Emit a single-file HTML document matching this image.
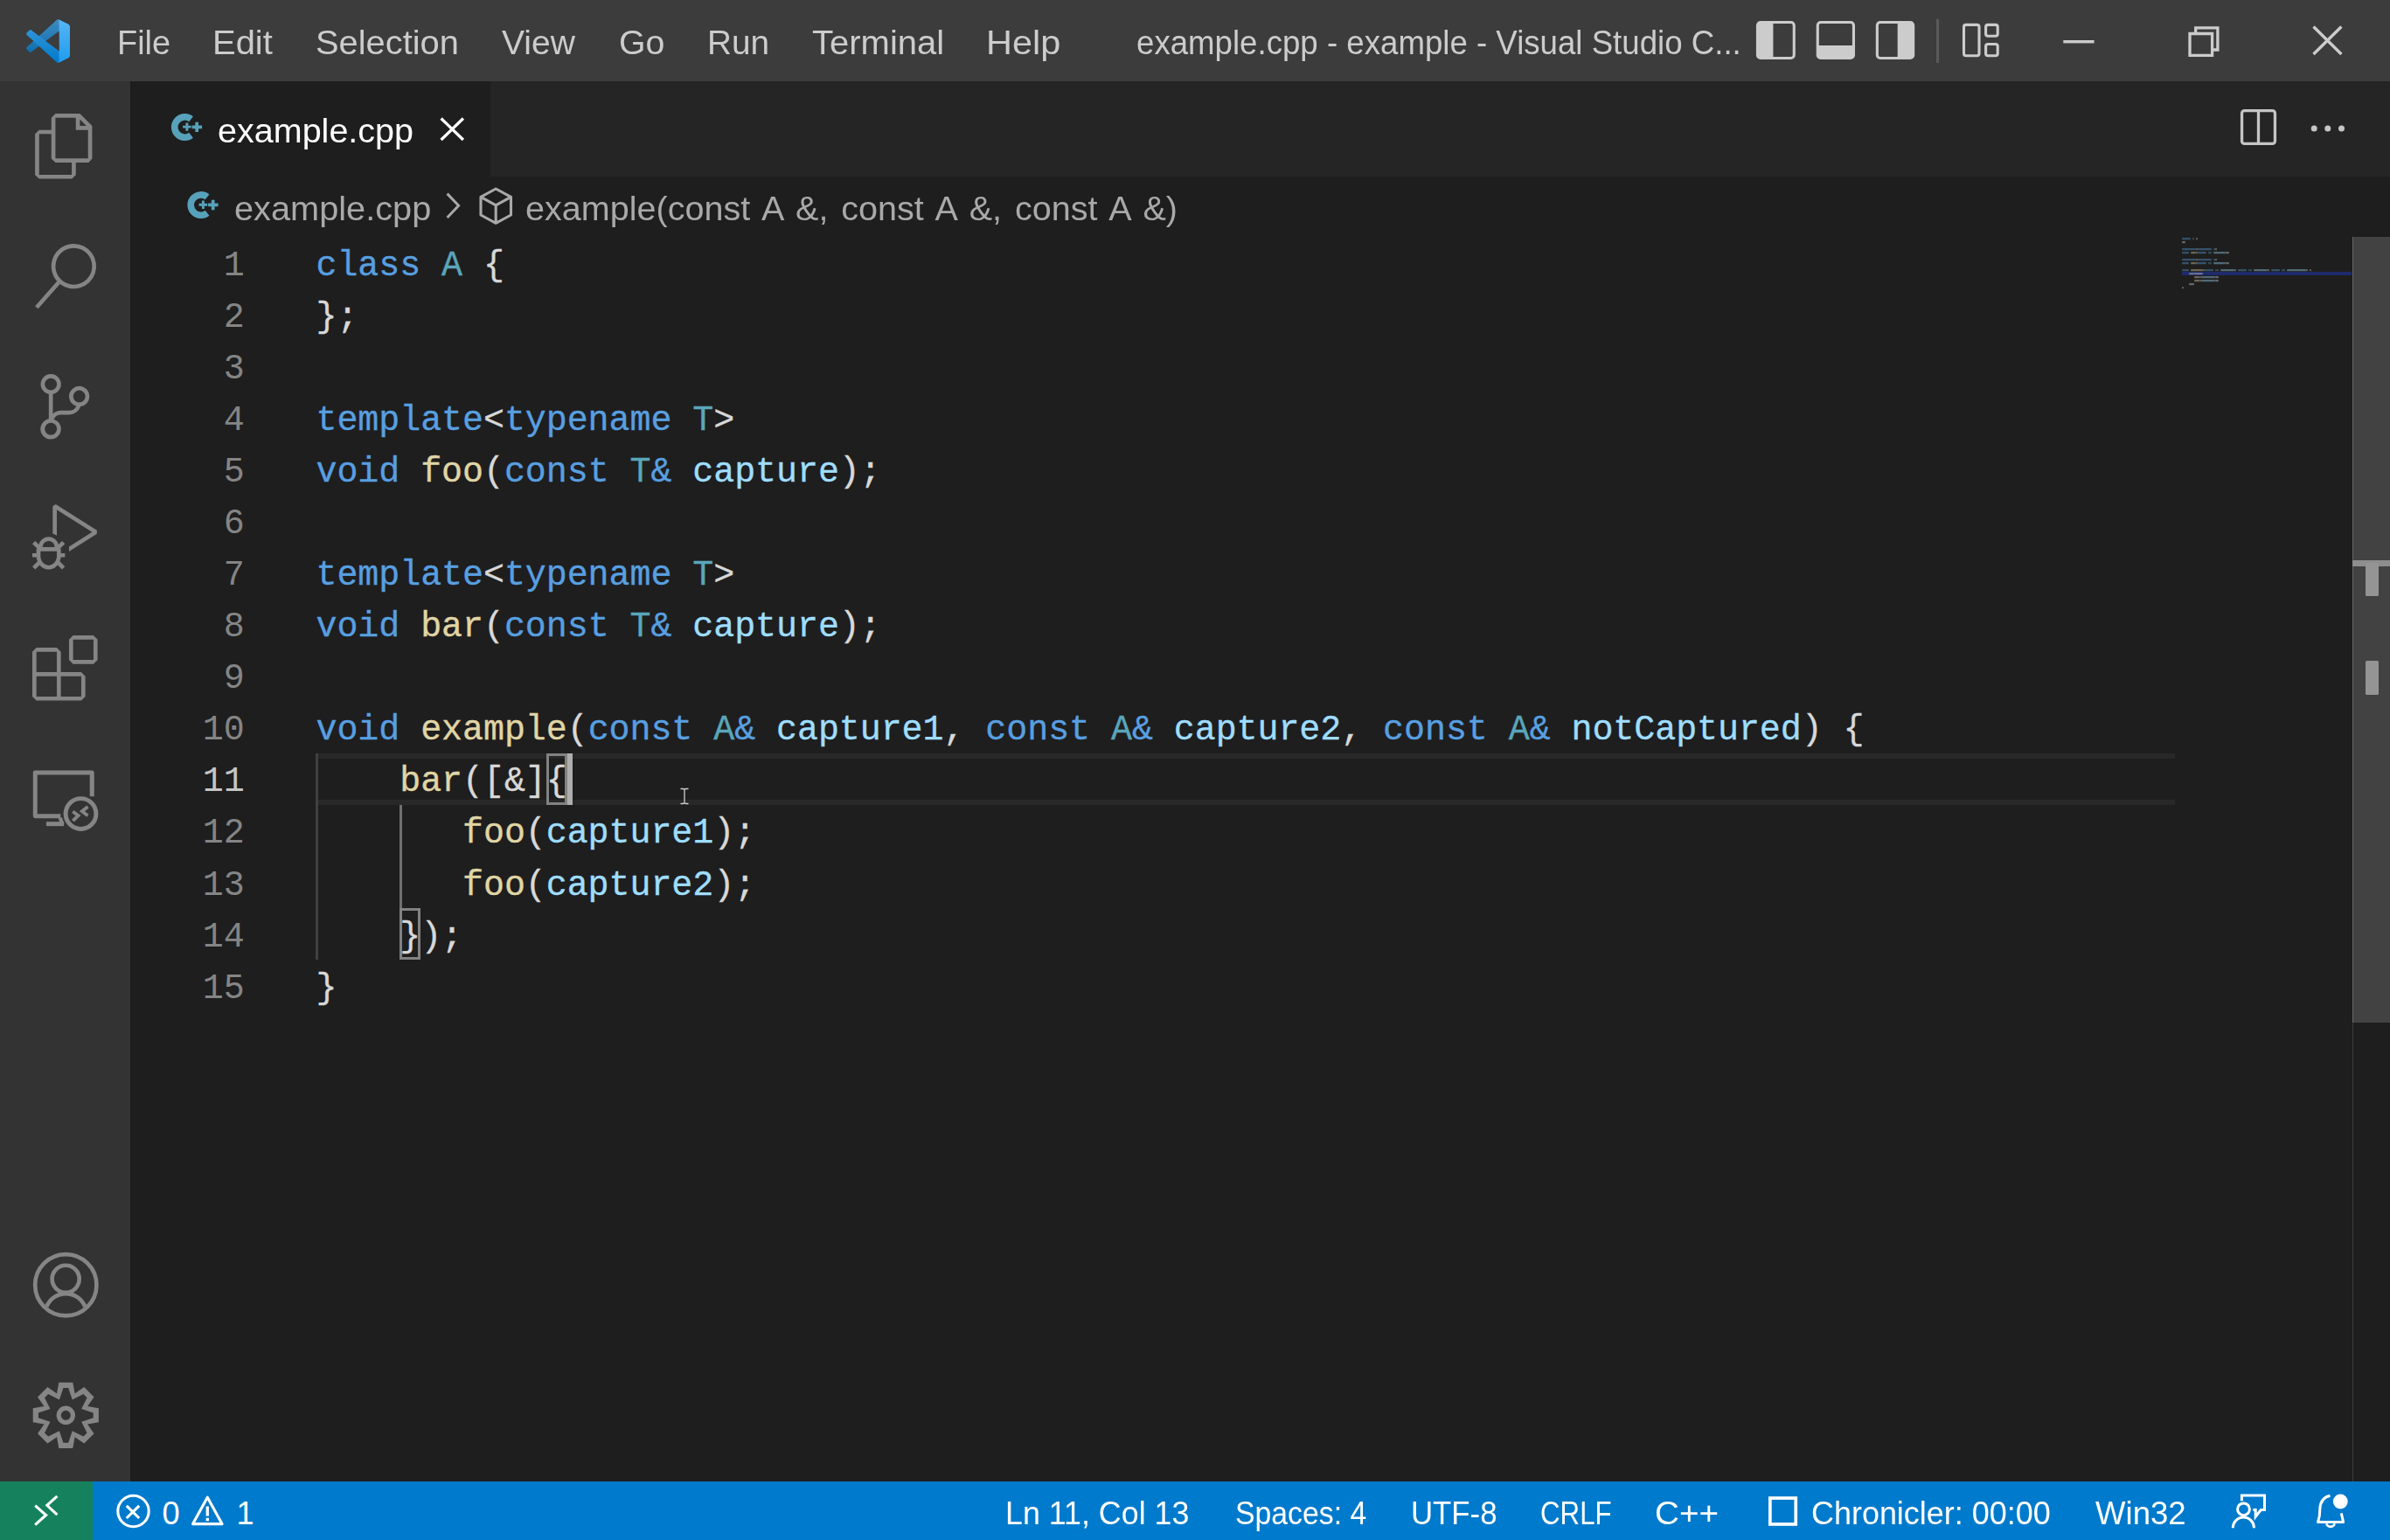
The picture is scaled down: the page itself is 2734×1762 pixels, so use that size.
<!DOCTYPE html>
<html><head><meta charset="utf-8"><title>example.cpp - example - Visual Studio Code</title>
<style>
html,body{margin:0;padding:0;background:#1e1e1e;}
body{width:2734px;height:1762px;position:relative;font-family:"Liberation Sans",sans-serif;}
.t{position:absolute;white-space:pre;display:block;}
.b{position:absolute;display:block;}
svg{position:absolute;overflow:visible;}

.cl{position:absolute;left:361.5px;height:59.07px;font:40.0px/59.07px "Liberation Mono",monospace;letter-spacing:-0.0739px;white-space:pre;color:#d8d8d8;-webkit-text-stroke:0.35px;}
.ln{position:absolute;left:79.60000000000002px;width:200px;text-align:right;height:59.07px;font:40.0px/59.07px "Liberation Mono",monospace;letter-spacing:-0.0739px;white-space:pre;color:#858585;}
.k{color:#589fe0}.y{color:#5aa6ba}.f{color:#e0d5a5}.v{color:#9fddff}

</style></head><body>
<i class="b" style="left:0.00px;top:0.00px;width:2734.00px;height:93.00px;background:#3c3c3c;"></i>
<i class="b" style="left:0.00px;top:93.00px;width:149.00px;height:1602.00px;background:#333333;"></i>
<i class="b" style="left:149.00px;top:93.00px;width:2585.00px;height:109.00px;background:#252526;"></i>
<i class="b" style="left:149.00px;top:93.00px;width:412.00px;height:109.00px;background:#1e1e1e;"></i>
<i class="b" style="left:0.00px;top:1695.00px;width:2734.00px;height:67.00px;background:#007acc;"></i>
<i class="b" style="left:0.00px;top:1695.00px;width:106.00px;height:67.00px;background:#16825d;"></i>
<svg style="left:30.00px;top:22.00px;" width="50.00" height="50.00" viewBox="0 0 100 100"><defs><mask id="lm" maskUnits="userSpaceOnUse" x="0" y="0" width="100" height="100" style="mask-type:alpha"><path fill="#fff" fill-rule="evenodd" d="M70.9119 99.3171C72.4869 99.9307 74.2828 99.8914 75.8725 99.1264L96.4608 89.2197C98.6242 88.1787 100 85.9892 100 83.5872V16.4133C100 14.0113 98.6243 11.8218 96.4609 10.7808L75.8725 0.873756C73.7862 -0.130129 71.3446 0.11576 69.5135 1.44695C69.252 1.63711 69.0028 1.84943 68.769 2.08341L29.3551 38.0415L12.1872 25.0096C10.589 23.7965 8.35363 23.8959 6.86933 25.2461L1.36303 30.2549C-0.452552 31.9064 -0.454633 34.7627 1.35853 36.417L16.2471 50.0001L1.35853 63.5832C-0.454633 65.2374 -0.452552 68.0938 1.36303 69.7453L6.86933 74.7541C8.35363 76.1043 10.589 76.2037 12.1872 74.9905L29.3551 61.9587L68.769 97.9167C69.3925 98.5406 70.1246 99.0104 70.9119 99.3171ZM75.0152 27.2989L45.1091 50.0001L75.0152 72.7012V27.2989Z"/></mask>
<linearGradient id="lg" x1="50" y1="0" x2="50" y2="100" gradientUnits="userSpaceOnUse"><stop stop-color="#fff"/><stop offset="1" stop-color="#fff" stop-opacity="0"/></linearGradient></defs>
<g mask="url(#lm)">
<path d="M96.4614 10.7962L75.8569 0.875542C73.4719 -0.272773 70.6217 0.211611 68.75 2.08333L1.29858 63.5832C-0.515693 65.2373 -0.513607 68.0937 1.30308 69.7452L6.81272 74.754C8.29793 76.1042 10.5347 76.2036 12.1338 74.9905L93.3609 13.3699C96.086 11.3026 100 13.2462 100 16.6667V16.4275C100 14.0265 98.6246 11.8378 96.4614 10.7962Z" fill="#0065A9"/>
<path d="M96.4614 89.2038L75.8569 99.1245C73.4719 100.273 70.6217 99.7884 68.75 97.9167L1.29858 36.4169C-0.515693 34.7627 -0.513607 31.9063 1.30308 30.2548L6.81272 25.246C8.29793 23.8958 10.5347 23.7964 12.1338 25.0095L93.3609 86.6301C96.086 88.6974 100 86.7538 100 83.3334V83.5726C100 85.9735 98.6246 88.1622 96.4614 89.2038Z" fill="#007ACC"/>
<path d="M75.8578 99.1263C73.4721 100.274 70.6219 99.7885 68.75 97.9166C71.0564 100.223 75 98.5895 75 95.3278V4.67213C75 1.41039 71.0564 -0.223106 68.75 2.08329C70.6219 0.211402 73.4721 -0.273666 75.8578 0.873633L96.4587 10.7807C98.6234 11.8217 100 14.0112 100 16.4132V83.5871C100 85.9891 98.6234 88.1786 96.4586 89.2196L75.8578 99.1263Z" fill="#1F9CF0"/>
<path opacity="0.25" fill="url(#lg)" fill-rule="evenodd" d="M70.8511 99.3171C72.4261 99.9306 74.2221 99.8913 75.8117 99.1264L96.4 89.2197C98.5634 88.1787 99.9392 85.9892 99.9392 83.5871V16.4133C99.9392 14.0112 98.5635 11.8217 96.4001 10.7807L75.8117 0.873695C73.7255 -0.13019 71.2838 0.115699 69.4527 1.44688C69.1912 1.63705 68.942 1.84937 68.7082 2.08335L29.2943 38.0414L12.1264 25.0096C10.5283 23.7964 8.29285 23.8959 6.80855 25.246L1.30225 30.2548C-0.513334 31.9064 -0.515415 34.7627 1.29775 36.4169L16.1863 50L1.29775 63.5832C-0.515415 65.2374 -0.513334 68.0937 1.30225 69.7452L6.80855 74.754C8.29285 76.1042 10.5283 76.2036 12.1264 74.9905L29.2943 61.9586L68.7082 97.9167C69.3317 98.5405 70.0638 99.0104 70.8511 99.3171ZM74.9544 27.2989L45.0483 50L74.9544 72.7012V27.2989Z"/>
</g></svg>
<span id="m0" class="t" style="left:133.50px;top:22.47px;font:39.2px/54.88px 'Liberation Sans',sans-serif;color:#cccccc;transform:scaleX(0.9681);transform-origin:0 0;">File</span>
<span id="m1" class="t" style="left:242.50px;top:22.47px;font:39.2px/54.88px 'Liberation Sans',sans-serif;color:#cccccc;transform:scaleX(1.0192);transform-origin:0 0;">Edit</span>
<span id="m2" class="t" style="left:361.00px;top:22.47px;font:39.2px/54.88px 'Liberation Sans',sans-serif;color:#cccccc;transform:scaleX(1.0166);transform-origin:0 0;">Selection</span>
<span id="m3" class="t" style="left:574.00px;top:22.47px;font:39.2px/54.88px 'Liberation Sans',sans-serif;color:#cccccc;transform:scaleX(0.9958);transform-origin:0 0;">View</span>
<span id="m4" class="t" style="left:708.00px;top:22.47px;font:39.2px/54.88px 'Liberation Sans',sans-serif;color:#cccccc;transform:scaleX(1.0012);transform-origin:0 0;">Go</span>
<span id="m5" class="t" style="left:809.00px;top:22.47px;font:39.2px/54.88px 'Liberation Sans',sans-serif;color:#cccccc;transform:scaleX(0.9890);transform-origin:0 0;">Run</span>
<span id="m6" class="t" style="left:929.00px;top:22.47px;font:39.2px/54.88px 'Liberation Sans',sans-serif;color:#cccccc;transform:scaleX(1.0208);transform-origin:0 0;">Terminal</span>
<span id="m7" class="t" style="left:1128.00px;top:22.47px;font:39.2px/54.88px 'Liberation Sans',sans-serif;color:#cccccc;transform:scaleX(1.0568);transform-origin:0 0;">Help</span>
<span id="ttl" class="t" style="left:1300.00px;top:22.47px;font:39.2px/54.88px 'Liberation Sans',sans-serif;color:#cccccc;transform:scaleX(0.9350);transform-origin:0 0;">example.cpp - example - Visual Studio C...</span>
<svg style="left:0.00px;top:0.00px;" width="2734.00" height="93.00"><rect x="2010.45" y="25.45" width="41.80" height="41.10" rx="3.5" fill="none" stroke="#cccccc" stroke-width="3.1"/><path d="M2010.9 25.9H2028.4V66.1H2010.9Z" fill="#cccccc"/><rect x="2079.25" y="25.45" width="41.20" height="41.10" rx="3.5" fill="none" stroke="#cccccc" stroke-width="3.1"/><path d="M2079.7 66.1V51.9H2120V66.1Z" fill="#cccccc"/><rect x="2147.35" y="25.45" width="41.30" height="41.10" rx="3.5" fill="none" stroke="#cccccc" stroke-width="3.1"/><path d="M2188.2 25.9H2170.7V66.1H2188.2Z" fill="#cccccc"/><rect x="2215" y="21.8" width="3.1" height="50.2" fill="#5a5a5a"/><rect x="2246.5" y="28.4" width="17.5" height="35.4" rx="2.5" fill="none" stroke="#cccccc" stroke-width="3.1"/><rect x="2271.6" y="28.4" width="13.6" height="12.8" rx="2.5" fill="none" stroke="#cccccc" stroke-width="3.1"/><rect x="2271.6" y="50.5" width="13.6" height="13.3" rx="2.5" fill="none" stroke="#cccccc" stroke-width="3.1"/><rect x="2360.3" y="46" width="35.3" height="3.4" fill="#cccccc"/><path d="M2505 38.5H2530.6V63.3H2505Z M2511.7 38.5V31.8H2536.9V57H2530.6" fill="none" stroke="#cccccc" stroke-width="3.3"/><path d="M2646.5 30.5L2678.4 62M2678.4 30.5L2646.5 62" fill="none" stroke="#cccccc" stroke-width="3.4"/></svg>
<svg style="left:37.30px;top:129.71px;" width="74.62" height="74.62" viewBox="0 0 24 24"><path d="M17.5 0h-9L7 1.5V6H2.5L1 7.5v15.07L2.5 24h12.07L16 22.57V18h4.7l1.3-1.43V4.5L17.5 0zm0 2.12l2.38 2.38H17.5V2.12zm-3 20.38h-12v-15H7v9.07L8.5 18h6v4.5zm6-6h-12v-15H16V6h4.5v10.5z" fill="#858585"/></svg>
<svg style="left:37.30px;top:278.94px;" width="74.62" height="74.62" viewBox="0 0 24 24"><path d="M15.25 0a8.25 8.25 0 0 0-6.18 13.72L1 22.88l1.12 1 8.05-9.12A8.251 8.251 0 1 0 15.25.01V0zm0 15a6.75 6.75 0 1 1 0-13.5 6.75 6.75 0 0 1 0 13.5z" fill="#858585"/></svg>
<svg style="left:37.30px;top:428.17px;" width="74.62" height="74.62" viewBox="0 0 24 24"><path d="M21.007 8.222A3.738 3.738 0 0 0 15.045 5.2a3.737 3.737 0 0 0 1.156 6.583 2.988 2.988 0 0 1-2.668 1.67h-2.99a4.456 4.456 0 0 0-2.989 1.165V7.4a3.737 3.737 0 1 0-1.494 0v9.117a3.776 3.776 0 1 0 1.816.099 2.99 2.99 0 0 1 2.668-1.667h2.99a4.484 4.484 0 0 0 4.223-3.039 3.736 3.736 0 0 0 3.25-3.687zM4.565 3.738a2.242 2.242 0 1 1 4.484 0 2.242 2.242 0 0 1-4.484 0zm4.484 16.441a2.242 2.242 0 1 1-4.484 0 2.242 2.242 0 0 1 4.484 0zm8.221-9.715a2.242 2.242 0 1 1 0-4.485 2.242 2.242 0 0 1 0 4.485z" fill="#858585"/></svg>
<svg style="left:37.30px;top:577.40px;" width="74.62" height="74.62" viewBox="0 0 24 24"><path d="M10.94 13.5l-1.32 1.32a3.73 3.73 0 0 0-7.24 0L1.06 13.5 0 14.56l1.72 1.72-.22.22V18H0v1.5h1.5v.08c.077.489.214.966.41 1.42L0 22.94 1.06 24l1.65-1.65A4.308 4.308 0 0 0 6 24a4.31 4.31 0 0 0 3.29-1.65L10.94 24 12 22.94 10.09 21c.198-.464.336-.951.41-1.45v-.1H12V18h-1.5v-1.5l-.22-.22L12 14.56l-1.06-1.06zM6 13.5a2.25 2.25 0 0 1 2.25 2.25h-4.5A2.25 2.25 0 0 1 6 13.5zm3 6a3.33 3.33 0 0 1-3 3 3.33 3.33 0 0 1-3-3v-2.25h6v2.25zm14.76-9.9v1.26L13.5 17.37V15.6l8.5-5.37L9 2v9.46a5.07 5.07 0 0 0-1.5-.72V.63L8.64 0l15.12 9.6z" fill="#858585"/></svg>
<svg style="left:37.30px;top:726.64px;" width="74.62" height="74.62" viewBox="0 0 24 24"><path d="M13.5 1.5L15 0h7.5L24 1.5V9l-1.5 1.5H15L13.5 9V1.5zm1.5 0V9h7.5V1.5H15zM0 15V6l1.5-1.5H9L10.5 6v7.5H18l1.5 1.5v7.5L18 24H1.5L0 22.5V15zm9-1.5V6H1.5v7.5H9zM9 15H1.5v7.5H9V15zm1.5 7.5H18V15h-7.5v7.5z" fill="#858585"/></svg>
<svg style="left:37.30px;top:876.47px;" width="74.62" height="74.62" viewBox="0 0 24 24"><path d="M10.4 18.55H1.05V2.55H21.95V11.3" fill="none" stroke="#858585" stroke-width="1.6" stroke-linejoin="round"/><path d="M5.1 21.45H11.6" fill="none" stroke="#858585" stroke-width="1.6"/><path d="M10.2 19.2L11.1 21.6" fill="none" stroke="#858585" stroke-width="1.4"/><circle cx="17.85" cy="17.7" r="5.6" fill="none" stroke="#858585" stroke-width="1.6"/><path d="M14.9 16.9L16.9 18.4L14.9 20.3M20.4 15.1L18.3 16.8L20.4 18.4" fill="none" stroke="#858585" stroke-width="1.25"/></svg>
<svg style="left:37.60px;top:1432.84px;" width="74.62" height="74.62" viewBox="0 0 24 24"><circle cx="12" cy="12" r="11.3" fill="none" stroke="#858585" stroke-width="1.5"/><circle cx="11.95" cy="9.75" r="5.0" fill="none" stroke="#858585" stroke-width="1.5"/><path d="M4.95 19.9A7.6 7.6 0 0 1 19.05 19.9" fill="none" stroke="#858585" stroke-width="1.5"/></svg>
<svg style="left:37.90px;top:1582.38px;" width="74.62" height="74.62" viewBox="0 0 24 24"><path d="M9.43 -0.09L14.57 -0.09L15.31 4.01L18.73 1.63L22.37 5.27L19.99 8.69L24.09 9.43L24.09 14.57L19.99 15.31L22.37 18.73L18.73 22.37L15.31 19.99L14.57 24.09L9.43 24.09L8.69 19.99L5.27 22.37L1.63 18.73L4.01 15.31L-0.09 14.57L-0.09 9.43L4.01 8.69L1.63 5.27L5.27 1.63L8.69 4.01ZM11.07 1.90L12.93 1.90L14.38 6.26L18.48 4.20L19.80 5.52L17.74 9.62L22.10 11.07L22.10 12.93L17.74 14.38L19.80 18.48L18.48 19.80L14.38 17.74L12.93 22.10L11.07 22.10L9.62 17.74L5.52 19.80L4.20 18.48L6.26 14.38L1.90 12.93L1.90 11.07L6.26 9.62L4.20 5.52L5.52 4.20L9.62 6.26Z" fill="#858585" fill-rule="evenodd"/><circle cx="12" cy="12" r="2.61" fill="none" stroke="#858585" stroke-width="1.67"/></svg>
<svg style="left:0.00px;top:0.00px;" width="2734.00" height="300.00"><path d="M218.60 136.28A11.70 11.70 0 1 0 218.60 154.72" fill="none" stroke="#57a2ba" stroke-width="7.60"/><path d="M209.10 145.10H218.70M213.90 140.40V149.80" stroke="#57a2ba" stroke-width="2.90" fill="none"/><path d="M219.60 145.30H231.10M225.20 139.70V151.10" stroke="#57a2ba" stroke-width="3.70" fill="none"/><path d="M237.10 225.38A11.70 11.70 0 1 0 237.10 243.82" fill="none" stroke="#57a2ba" stroke-width="7.60"/><path d="M227.60 234.20H237.20M232.40 229.50V238.90" stroke="#57a2ba" stroke-width="2.90" fill="none"/><path d="M238.10 234.40H249.60M243.70 228.80V240.20" stroke="#57a2ba" stroke-width="3.70" fill="none"/><path d="M504.6 135.5L529.9 160M529.9 135.5L504.6 160" stroke="#ffffff" stroke-width="3.3" fill="none"/><path d="M511.6 221.6L524.6 235.3L511.6 249" stroke="#a9a9a9" stroke-width="3" fill="none"/><path d="M567.2 216L584.5 225.3V246L567.2 255.3L550 246V225.3Z M550.5 225.6L567.2 234.8L584 225.6 M567.2 234.8V255" stroke="#a9a9a9" stroke-width="3.1" fill="none" stroke-linejoin="round"/><rect x="2564.55" y="126.55" width="37.9" height="37.9" rx="3" fill="none" stroke="#c5c5c5" stroke-width="3.3"/><path d="M2583.5 126.5V164.5" stroke="#c5c5c5" stroke-width="3.3"/><circle cx="2647.2" cy="147.1" r="3.5" fill="#c5c5c5"/><circle cx="2662.8" cy="147.1" r="3.5" fill="#c5c5c5"/><circle cx="2678.5" cy="147.1" r="3.5" fill="#c5c5c5"/></svg>
<span id="tab" class="t" style="left:248.50px;top:122.97px;font:39.2px/54.88px 'Liberation Sans',sans-serif;color:#ffffff;transform:scaleX(1.0084);transform-origin:0 0;">example.cpp</span>
<span id="bc1" class="t" style="left:267.50px;top:211.67px;font:39.2px/54.88px 'Liberation Sans',sans-serif;color:#a9a9a9;transform:scaleX(1.0138);transform-origin:0 0;">example.cpp</span>
<span id="bc2" class="t" style="left:601.00px;top:211.67px;font:39.2px/54.88px 'Liberation Sans',sans-serif;color:#a9a9a9;transform:scaleX(1.0092);transform-origin:0 0;word-spacing:3.9px;">example(const A &amp;, const A &amp;, const A &amp;)</span>
<i class="b" style="left:361.00px;top:862.00px;width:2127.00px;height:59.07px;background:transparent;box-sizing:border-box;border-top:6.2px solid #282828;border-bottom:6.2px solid #282828;"></i>
<i class="b" style="left:361.00px;top:862.00px;width:3.10px;height:236.28px;background:#404040;"></i>
<i class="b" style="left:457.22px;top:921.07px;width:3.10px;height:118.14px;background:#707070;"></i>
<i class="b" style="left:624.73px;top:862.00px;width:23.93px;height:59.07px;background:transparent;box-sizing:border-box;border:3px solid #828282;"></i>
<i class="b" style="left:457.22px;top:1039.21px;width:23.93px;height:59.07px;background:transparent;box-sizing:border-box;border:3px solid #828282;"></i>
<i class="b" style="left:648.66px;top:862.00px;width:6.20px;height:59.07px;background:#aeafad;"></i>
<div class="ln" style="top:274.70px">1</div>
<div class="cl" style="top:274.70px"><span class="k">class</span> <span class="y">A</span> {</div>
<div class="ln" style="top:333.77px">2</div>
<div class="cl" style="top:333.77px">};</div>
<div class="ln" style="top:392.84px">3</div>
<div class="ln" style="top:451.91px">4</div>
<div class="cl" style="top:451.91px"><span class="k">template</span>&lt;<span class="k">typename</span> <span class="y">T</span>&gt;</div>
<div class="ln" style="top:510.98px">5</div>
<div class="cl" style="top:510.98px"><span class="k">void</span> <span class="f">foo</span>(<span class="k">const</span> <span class="y">T</span><span class="k">&amp;</span> <span class="v">capture</span>);</div>
<div class="ln" style="top:570.05px">6</div>
<div class="ln" style="top:629.12px">7</div>
<div class="cl" style="top:629.12px"><span class="k">template</span>&lt;<span class="k">typename</span> <span class="y">T</span>&gt;</div>
<div class="ln" style="top:688.19px">8</div>
<div class="cl" style="top:688.19px"><span class="k">void</span> <span class="f">bar</span>(<span class="k">const</span> <span class="y">T</span><span class="k">&amp;</span> <span class="v">capture</span>);</div>
<div class="ln" style="top:747.26px">9</div>
<div class="ln" style="top:806.33px">10</div>
<div class="cl" style="top:806.33px"><span class="k">void</span> <span class="f">example</span>(<span class="k">const</span> <span class="y">A</span><span class="k">&amp;</span> <span class="v">capture1</span>, <span class="k">const</span> <span class="y">A</span><span class="k">&amp;</span> <span class="v">capture2</span>, <span class="k">const</span> <span class="y">A</span><span class="k">&amp;</span> <span class="v">notCaptured</span>) {</div>
<div class="ln" style="top:865.40px;color:#c6c6c6">11</div>
<div class="cl" style="top:865.40px">    <span class="f">bar</span>([&amp;]{</div>
<div class="ln" style="top:924.47px">12</div>
<div class="cl" style="top:924.47px">       <span class="f">foo</span>(<span class="v">capture1</span>);</div>
<div class="ln" style="top:983.54px">13</div>
<div class="cl" style="top:983.54px">       <span class="f">foo</span>(<span class="v">capture2</span>);</div>
<div class="ln" style="top:1042.61px">14</div>
<div class="cl" style="top:1042.61px">    });</div>
<div class="ln" style="top:1101.68px">15</div>
<div class="cl" style="top:1101.68px">}</div>
<svg style="left:776.00px;top:901.00px;" width="14.00" height="20.00"><path d="M2.5 1.5H5.5Q7 1.5 7 3V17Q7 18.5 5.5 18.5H2.5M11.5 1.5H8.5Q7 1.5 7 3M7 17Q7 18.5 8.5 18.5H11.5" fill="none" stroke="#d0d0d0" stroke-width="1.3"/></svg>
<i class="b" style="left:2496.00px;top:311.00px;width:194.00px;height:4.00px;background:#1f2a6b;"></i>
<svg style="left:0.00px;top:0.00px;opacity:.4" width="2734.00" height="400.00"><path d="M2496.2 271.9h9.6v2.3h-9.6zM2496.2 283.9h15.6v2.3h-15.6zM2514.2 283.9h15.6v2.3h-15.6zM2496.2 287.9h7.6v2.3h-7.6zM2514.2 287.9h9.6v2.3h-9.6zM2528.2 287.9h1.6v2.3h-1.6zM2496.2 295.9h15.6v2.3h-15.6zM2514.2 295.9h15.6v2.3h-15.6zM2496.2 299.9h7.6v2.3h-7.6zM2514.2 299.9h9.6v2.3h-9.6zM2528.2 299.9h1.6v2.3h-1.6zM2496.2 307.9h7.6v2.3h-7.6zM2522.2 307.9h9.6v2.3h-9.6zM2536.2 307.9h1.6v2.3h-1.6zM2560.2 307.9h9.6v2.3h-9.6zM2574.2 307.9h1.6v2.3h-1.6zM2598.2 307.9h9.6v2.3h-9.6zM2612.2 307.9h1.6v2.3h-1.6z" fill="#589fe0"/><path d="M2508.2 271.9h1.6v2.3h-1.6zM2532.2 283.9h1.6v2.3h-1.6zM2526.2 287.9h1.6v2.3h-1.6zM2532.2 295.9h1.6v2.3h-1.6zM2526.2 299.9h1.6v2.3h-1.6zM2534.2 307.9h1.6v2.3h-1.6zM2572.2 307.9h1.6v2.3h-1.6zM2610.2 307.9h1.6v2.3h-1.6z" fill="#5aa6ba"/><path d="M2512.2 271.9h1.6v2.3h-1.6zM2496.2 275.9h3.6v2.3h-3.6zM2512.2 283.9h1.6v2.3h-1.6zM2534.2 283.9h1.6v2.3h-1.6zM2512.2 287.9h1.6v2.3h-1.6zM2546.2 287.9h3.6v2.3h-3.6zM2512.2 295.9h1.6v2.3h-1.6zM2534.2 295.9h1.6v2.3h-1.6zM2512.2 299.9h1.6v2.3h-1.6zM2546.2 299.9h3.6v2.3h-3.6zM2520.2 307.9h1.6v2.3h-1.6zM2556.2 307.9h1.6v2.3h-1.6zM2594.2 307.9h1.6v2.3h-1.6zM2638.2 307.9h1.6v2.3h-1.6zM2642.2 307.9h1.6v2.3h-1.6zM2510.2 311.9h9.6v2.3h-9.6zM2516.2 315.9h1.6v2.3h-1.6zM2534.2 315.9h3.6v2.3h-3.6zM2516.2 319.9h1.6v2.3h-1.6zM2534.2 319.9h3.6v2.3h-3.6zM2504.2 323.9h5.6v2.3h-5.6zM2496.2 327.9h1.6v2.3h-1.6z" fill="#d8d8d8"/><path d="M2506.2 287.9h5.6v2.3h-5.6zM2506.2 299.9h5.6v2.3h-5.6zM2506.2 307.9h13.6v2.3h-13.6zM2504.2 311.9h5.6v2.3h-5.6zM2510.2 315.9h5.6v2.3h-5.6zM2510.2 319.9h5.6v2.3h-5.6z" fill="#e0d5a5"/><path d="M2532.2 287.9h13.6v2.3h-13.6zM2532.2 299.9h13.6v2.3h-13.6zM2540.2 307.9h15.6v2.3h-15.6zM2578.2 307.9h15.6v2.3h-15.6zM2616.2 307.9h21.6v2.3h-21.6zM2518.2 315.9h15.6v2.3h-15.6zM2518.2 319.9h15.6v2.3h-15.6z" fill="#9fddff"/></svg>
<i class="b" style="left:2691.00px;top:271.00px;width:43.00px;height:898.50px;background:#424242;"></i>
<i class="b" style="left:2691.00px;top:271.00px;width:1.20px;height:1424.00px;background:#3a3a3a;"></i>
<i class="b" style="left:2691.00px;top:271.00px;width:1.20px;height:898.50px;background:#666666;"></i>
<i class="b" style="left:2691.00px;top:641.00px;width:43.00px;height:6.50px;background:#8e8e8e;"></i>
<i class="b" style="left:2706.00px;top:643.60px;width:15.00px;height:38.50px;background:#949494;border-radius:1.5px"></i>
<i class="b" style="left:2706.00px;top:756.00px;width:15.00px;height:38.50px;background:#949494;border-radius:1.5px"></i>
<svg style="left:0.00px;top:0.00px;" width="2734.00" height="1762.00"><path d="M40.2 1722.6L52.6 1733.5L40.2 1744.6M65.4 1711.8L53.8 1722.3L65.4 1733.2" fill="none" stroke="#ffffff" stroke-width="3.1"/><circle cx="152.5" cy="1729" r="17.7" fill="none" stroke="#ffffff" stroke-width="3.1"/><path d="M144.8 1722.9L159.2 1737M159.2 1722.9L144.8 1737" stroke="#ffffff" stroke-width="3.1" fill="none"/><path d="M237.3 1713.2L254 1743.6H220.6Z" fill="none" stroke="#ffffff" stroke-width="3.1" stroke-linejoin="round"/><path d="M237.3 1723.5V1734.5M237.3 1736.8V1740.3" stroke="#ffffff" stroke-width="3.3" fill="none"/><rect x="2024.85" y="1714.05" width="29.4" height="29.9" fill="none" stroke="#ffffff" stroke-width="3.7"/><path d="M2564.4 1717.2V1711.1H2590.5V1727.5H2586.3L2580.2 1735.4V1727.5H2577.4" fill="none" stroke="#ffffff" stroke-width="3" stroke-linejoin="miter"/><circle cx="2566.5" cy="1726.8" r="6.9" fill="none" stroke="#ffffff" stroke-width="3"/><path d="M2554.3 1748.2A12.1 12.1 0 0 1 2578.5 1748.2" fill="none" stroke="#ffffff" stroke-width="3"/><circle cx="2677.3" cy="1718" r="8.4" fill="#ffffff"/><path d="M2665.5 1711.2C2657 1713 2654 1719 2653.8 1727L2653.3 1734.5L2651.6 1741.5H2680.6L2678.3 1731.4" fill="none" stroke="#ffffff" stroke-width="3" stroke-linejoin="round"/><path d="M2661.6 1743.2A4.4 3.6 0 0 0 2670.4 1743.2" fill="none" stroke="#ffffff" stroke-width="2.8"/></svg>
<span id="s0" class="t" style="left:185.50px;top:1706.51px;font:36.2px/50.68px 'Liberation Sans',sans-serif;color:#ffffff;transform:scaleX(1.0000);transform-origin:0 0;">0</span>
<span id="s1" class="t" style="left:270.50px;top:1706.51px;font:36.2px/50.68px 'Liberation Sans',sans-serif;color:#ffffff;transform:scaleX(1.0000);transform-origin:0 0;">1</span>
<span id="s2" class="t" style="left:1150.20px;top:1706.51px;font:36.2px/50.68px 'Liberation Sans',sans-serif;color:#ffffff;transform:scaleX(0.9896);transform-origin:0 0;">Ln 11, Col 13</span>
<span id="s3" class="t" style="left:1413.30px;top:1706.51px;font:36.2px/50.68px 'Liberation Sans',sans-serif;color:#ffffff;transform:scaleX(0.9336);transform-origin:0 0;">Spaces: 4</span>
<span id="s4" class="t" style="left:1613.90px;top:1706.51px;font:36.2px/50.68px 'Liberation Sans',sans-serif;color:#ffffff;transform:scaleX(0.9608);transform-origin:0 0;">UTF-8</span>
<span id="s5" class="t" style="left:1762.40px;top:1706.51px;font:36.2px/50.68px 'Liberation Sans',sans-serif;color:#ffffff;transform:scaleX(0.8643);transform-origin:0 0;">CRLF</span>
<span id="s6" class="t" style="left:1892.70px;top:1706.51px;font:36.2px/50.68px 'Liberation Sans',sans-serif;color:#ffffff;transform:scaleX(1.0695);transform-origin:0 0;">C++</span>
<span id="s7" class="t" style="left:2071.90px;top:1706.51px;font:36.2px/50.68px 'Liberation Sans',sans-serif;color:#ffffff;transform:scaleX(0.9929);transform-origin:0 0;">Chronicler: 00:00</span>
<span id="s8" class="t" style="left:2396.90px;top:1706.51px;font:36.2px/50.68px 'Liberation Sans',sans-serif;color:#ffffff;transform:scaleX(1.0111);transform-origin:0 0;">Win32</span>
</body></html>
